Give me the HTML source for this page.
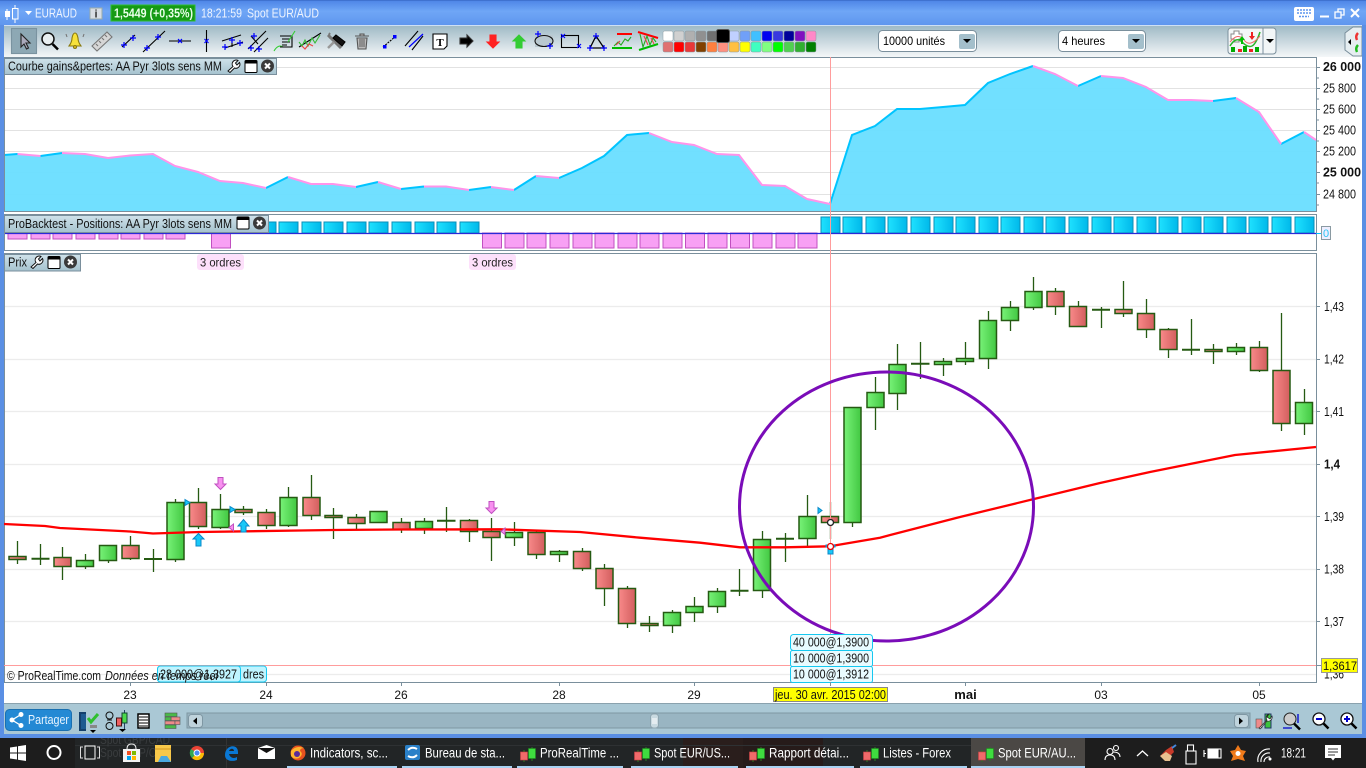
<!DOCTYPE html>
<html><head><meta charset="utf-8"><title>ProRealTime</title>
<style>html,body{margin:0;padding:0;background:#1c1c1c;width:1366px;height:768px;overflow:hidden}svg{display:block}text{font-family:"Liberation Sans",sans-serif}</style></head>
<body>
<svg width="1366" height="768" viewBox="0 0 1366 768" xmlns="http://www.w3.org/2000/svg">
<defs>
<linearGradient id="g"><stop offset="0" stop-color="#78f278"/><stop offset="1" stop-color="#42c842"/></linearGradient>
<linearGradient id="r"><stop offset="0" stop-color="#f98a8a"/><stop offset="1" stop-color="#d25e5e"/></linearGradient>
<linearGradient id="c"><stop offset="0" stop-color="#1fe2ff"/><stop offset="1" stop-color="#00b8ea"/></linearGradient>
<linearGradient id="tb" x2="0" y2="1"><stop offset="0" stop-color="#4c84e6"/><stop offset=".45" stop-color="#6fa6f6"/><stop offset="1" stop-color="#5f96ee"/></linearGradient>
<linearGradient id="tool" x2="0" y2="1"><stop offset="0" stop-color="#9db8c4"/><stop offset="1" stop-color="#f4f7f8"/></linearGradient>
<linearGradient id="leg" x2="0" y2="1"><stop offset="0" stop-color="#cfe2ea"/><stop offset="1" stop-color="#a5c2ce"/></linearGradient>
<g id="cd"><path d="M4 3V15M12 0V14" stroke="#2a7a20" stroke-width="1"/><rect x=".5" y="5" width="7" height="8" fill="#f06a6a" stroke="#c44" stroke-width=".6"/><rect x="8.500" y="1.500" width="7" height="10" fill="#3fdc3f" stroke="#1e8c1e" stroke-width=".6"/></g>
<g id="x"><circle cx="7" cy="7" r="6.500" fill="#3a3a3a"/><path d="M4.500 4.500L9.500 9.500M9.500 4.500L4.500 9.500" stroke="#fff" stroke-width="2"/></g>
<g id="w"><rect x=".5" y=".5" width="12" height="12" rx="1" fill="#fff" stroke="#000"/><rect x="1" y="1" width="11" height="2.500" fill="#000"/></g>
<path id="k" d="M1 13L6 8.500A4 4 0 0 1 11 2.500L8.500 5L10 7L12.500 4.500A4 4 0 0 1 7.500 10L3 14.500Z" fill="#fff" stroke="#111" stroke-width="1"/>
</defs>

<!-- background / frame -->
<rect width="1366" height="768" fill="#5a8fe4"/>
<rect width="1366" height="25" fill="url(#tb)"/>
<rect y="0" width="1366" height="1" fill="#3f72d0"/>
<rect x="4" y="25" width="1358" height="32" fill="url(#tool)"/>
<rect x="4" y="57" width="1358" height="647" fill="#fff"/>

<!-- title bar -->
<g>
<path d="M7 9V20M15 5V23" stroke="#fff"/><rect x="5" y="11" width="5" height="6" fill="#fff"/><rect x="12.500" y="8.500" width="5.500" height="10.500" fill="#6fa6f6" stroke="#fff"/>
<path d="M25 11h7l-3.500 4z" fill="#fff"/>
<text x="35" y="17.500" font-size="13" fill="#eef4ff" textLength="42" lengthAdjust="spacingAndGlyphs">EURAUD</text>
<rect x="90" y="8" width="12" height="11" fill="#d8dee4" stroke="#9aa"/><text x="96" y="17.500" font-size="11" font-weight="bold" text-anchor="middle" fill="#333">i</text>
<rect x="111" y="5" width="84" height="16" fill="#159a15" stroke="#2fbf2f"/>
<text x="114" y="17.500" font-size="13" font-weight="bold" fill="#e8ffe8" textLength="79" lengthAdjust="spacingAndGlyphs">1,5449 (+0,35%)</text>
<text x="201" y="17.500" font-size="13" fill="#eef4ff" textLength="41" lengthAdjust="spacingAndGlyphs">18:21:59</text>
<text x="247" y="17.500" font-size="13" fill="#eef4ff" textLength="72" lengthAdjust="spacingAndGlyphs">Spot EUR/AUD</text>
<rect x="1294" y="7" width="20" height="14" rx="2" fill="#fff"/><path d="M1297 10h14M1297 13h14M1299 16.500h10" stroke="#5f96ee" stroke-width="1.500" stroke-dasharray="2 1"/>
<path d="M1320 16.500h9" stroke="#fff" stroke-width="2"/>
<path d="M1335 12h6v6h-6zM1338 12V9h6v6h-3" fill="none" stroke="#fff" stroke-width="1.300"/>
<path d="M1351 9l8 8M1359 9l-8 8" stroke="#fff" stroke-width="2"/>
</g>
<rect x="4" y="25" width="1358" height="1" fill="#cfe0f5"/>

<!-- toolbar icons -->
<g fill="none" stroke="#000" stroke-width="1.100">
<rect x="11.500" y="28.500" width="25" height="25" fill="#8da8b4" stroke="#7a93a0"/>
<path d="M21 34V47L24 44L26.500 49L28.500 48L26 43H30Z" fill="#aab" stroke="#222"/>
<circle cx="48" cy="39" r="6" fill="#e8eef0" stroke="#111" stroke-width="1.500"/><path d="M52.500 44L58 49.500" stroke="#000" stroke-width="2.500"/>
<path d="M69 46Q72 42 72 38Q73 33 75 33Q77 33 78 38Q78 42 81 46Z" fill="#f7e23a" stroke="#8a7a10"/><circle cx="75" cy="47" r="1.500" fill="#e0c020" stroke="#8a7a10"/><path d="M67 37l-1-3M83 37l1-3" stroke="#777"/>
<path d="M92 46L107 32L112 37L97 51Z" fill="#d6d6d6" stroke="#777"/><path d="M96 44l2 2M99 41l2 2M102 38l2 2M105 35l2 2" stroke="#777"/>
<path d="M122 47L135 35"/>
<path d="M143 52L165 31"/>
<path d="M169 41H191M206.500 30V52M222 41L241 35M225 48L243 42M232 41V47"/>
<path d="M248 49L266 31M254 52L268 38M258 44L251 36"/>
<path d="M274 51Q278 44 283 47" stroke="#3c3"/><path d="M280 36H292V47H280M282 39H290M282 42H290M282 45H287"/><path d="M288 42L295 31" stroke="#3c3"/>
<path d="M299 47L321 33"/><path d="M299 42l3 4 3-6 3 6 4-8 3 5 5-8" stroke="#3b3"/><path d="M302 46l3 3 4-5 4 2" stroke="#e44"/>
<path d="M328 35L341 48" stroke="#777" stroke-width="3"/><path d="M330 33a4 4 0 0 0 0 5" stroke="#777" stroke-width="2"/><path d="M336 35L345 42L342 46L333 38Z" fill="#111"/><path d="M328 48l6-6" stroke="#999" stroke-width="2.500"/>
<path d="M355 36H369M360 36V34H364V36M357 38L358 49H366L367 38Z" fill="#bbb" stroke="#555"/><path d="M360 39V47M362 39V47M364 39V47" stroke="#666"/>
<path d="M383 47L396 36" stroke-dasharray="2 1"/>
<path d="M405 46L418 31M412 50L423 36" stroke="#000"/>
<path d="M433 34H447V46L444 49H433Z" fill="#fff" stroke="#000"/>
<path d="M460 38H467V35L473 41L467 47V44H460Z" fill="#000" stroke="#333"/>
<path d="M490 35H496V42H499L493 48L487 42H490Z" fill="#f22" stroke="#f22"/>
<path d="M516 48H522V41H525L519 35L513 41H516Z" fill="#3c3" stroke="#3c3"/>
<rect x="535" y="35" width="18" height="12" fill="#b9c8cf" stroke="none"/><ellipse cx="544" cy="41" rx="9" ry="5.500" stroke="#111"/>
<rect x="561.500" y="35.500" width="17" height="12" stroke="#000"/>
<path d="M596 36L590 48H604Z" stroke="#000" stroke-width="1.300"/>
<path d="M617 34H632" stroke="#f00" stroke-width="2"/><path d="M612 48H632" stroke="#0b0" stroke-width="2"/><path d="M614 46l4-4 3 3 4-6 3 2 3-4" stroke="#2a2"/><path d="M616 45l4-4" stroke="#d44"/>
<path d="M638 32L658 38" stroke="#f00" stroke-width="2"/><path d="M639 50L658 44" stroke="#0b0" stroke-width="2"/><path d="M640 34l3 13 4-11 3 9 3-7 3 4" stroke="#2a2"/><path d="M644 36l4 9M651 38l3 6" stroke="#e44"/>
</g>
<g stroke="#00f" stroke-width="1.200" fill="none">
<path d="M121 45H127M124 42V48M130 38H136M133 35V41M144 48H150M147 45V51M155 37H161M158 34V40"/>
<path d="M178 39L182 43M182 39L178 43M204.500 39L208.500 43M208.500 39L204.500 43M222 47H228M225 44V50M229 40H235M232 37V43M237 43H243M240 40V46"/>
<path d="M251 36h6M254 33v6M248 48h6M251 45v6M256 49h6M259 46v6"/>
<path d="M535 34h6M538 31v6M547 46h6M550 43v6M561 34l4 4M565 34l-4 4M577 44l4 4M581 44l-4 4M587 48h6M590 45v6M601 48h6M604 45v6M593 36h6M596 33v6"/>
<path d="M409 47L423 34"/>
</g>
<rect x="383" y="45" width="3.500" height="3.500" fill="#00f"/><rect x="393" y="35" width="3.500" height="3.500" fill="#00f"/>
<text x="440" y="46" font-size="11" font-weight="bold" text-anchor="middle" style="font-family:'Liberation Serif',serif">T</text>

<!-- swatches -->
<g stroke="#8a9aa2" stroke-width=".5">
<rect x="663" y="31" width="10" height="10" rx="1.500" fill="#fff"/><rect x="674" y="31" width="10" height="10" rx="1.500" fill="#d0d0d0"/><rect x="685" y="31" width="10" height="10" rx="1.500" fill="#b0b0b0"/><rect x="696" y="31" width="10" height="10" rx="1.500" fill="#909090"/><rect x="707" y="31" width="10" height="10" rx="1.500" fill="#707070"/><rect x="729" y="31" width="10" height="10" rx="1.500" fill="#c0d0ff"/><rect x="740" y="31" width="10" height="10" rx="1.500" fill="#70a0f8"/><rect x="751" y="31" width="10" height="10" rx="1.500" fill="#40c0ff"/><rect x="762" y="31" width="10" height="10" rx="1.500" fill="#0000f0"/><rect x="773" y="31" width="10" height="10" rx="1.500" fill="#3838e0"/><rect x="784" y="31" width="10" height="10" rx="1.500" fill="#00009a"/><rect x="795" y="31" width="10" height="10" rx="1.500" fill="#8010c0"/><rect x="806" y="31" width="10" height="10" rx="1.500" fill="#ff88c8"/>
<rect x="663" y="42" width="10" height="10" rx="1.500" fill="#e07070"/><rect x="674" y="42" width="10" height="10" rx="1.500" fill="#ff0000"/><rect x="685" y="42" width="10" height="10" rx="1.500" fill="#e83838"/><rect x="696" y="42" width="10" height="10" rx="1.500" fill="#804000"/><rect x="707" y="42" width="10" height="10" rx="1.500" fill="#ff8040"/><rect x="718" y="42" width="10" height="10" rx="1.500" fill="#ff9080"/><rect x="729" y="42" width="10" height="10" rx="1.500" fill="#ffc040"/><rect x="740" y="42" width="10" height="10" rx="1.500" fill="#ffff00"/><rect x="751" y="42" width="10" height="10" rx="1.500" fill="#40ffc0"/><rect x="762" y="42" width="10" height="10" rx="1.500" fill="#80ff80"/><rect x="773" y="42" width="10" height="10" rx="1.500" fill="#00ff00"/><rect x="784" y="42" width="10" height="10" rx="1.500" fill="#50d050"/><rect x="795" y="42" width="10" height="10" rx="1.500" fill="#30b030"/><rect x="806" y="42" width="10" height="10" rx="1.500" fill="#008000"/>
</g>
<rect x="716.500" y="29.500" width="13" height="13" rx="2" fill="#000" stroke="#555"/>

<!-- selects -->
<rect x="878.500" y="30.500" width="98" height="21" rx="4" fill="#fff" stroke="#7a8f9c"/>
<text x="883" y="45" font-size="12" textLength="62" lengthAdjust="spacingAndGlyphs">10000 unités</text>
<rect x="959" y="34" width="16" height="15" rx="2" fill="#a4bfcb"/><path d="M963 39h8l-4 4z"/>
<rect x="1058.500" y="30.500" width="87" height="21" rx="4" fill="#fff" stroke="#7a8f9c"/>
<text x="1062" y="45" font-size="12" textLength="43" lengthAdjust="spacingAndGlyphs">4 heures</text>
<rect x="1128" y="34" width="16" height="15" rx="2" fill="#a4bfcb"/><path d="M1132 39h8l-4 4z"/>
<rect x="1228" y="28" width="48" height="26" rx="3" fill="#f2f6f7" stroke="#7a8f9c"/><path d="M1263 28V54" stroke="#7a8f9c"/><path d="M1266 39h8l-4 4z"/>
<path d="M1231 34h3v-3h5v3h3v5h-3v3h-5v-3h-3z" fill="#fff" stroke="#888"/>
<path d="M1230 46Q1236 36 1242 42T1252 46T1260 32" fill="none" stroke="#2bb52b" stroke-width="1.500"/><path d="M1230 42Q1238 32 1244 40T1260 36" fill="none" stroke="#e66" stroke-width="1"/>
<path d="M1241 44V40h-2l3-4 3 4h-2v4z" fill="#0b0"/><path d="M1251 32v4h-2l3 4 3-4h-2v-4z" fill="#e22"/>
<path d="M1231 52V47h4v5zM1238 52v-3h4v3zM1243 52v-6h4v6zM1249 52v-3h4v3zM1255 52v-5h4v5z" fill="#0a0"/><path d="M1238 52v-3h4v3zM1249 52v-3h4v3z" fill="#e22"/>
<path d="M1362 27H1353L1345 33V50L1353 56H1362Z" fill="#e6eef1" stroke="#7a8f9c"/><path d="M1351 39v6l-3-3z"/><path d="M1358 33q-3 3-1 7" stroke="#e33" stroke-width="2.500" fill="none"/><path d="M1358 45q-3 3-1 7" stroke="#2b2" stroke-width="2.500" fill="none"/>

<!-- panel 1: equity curve -->
<g stroke="#e2e2e2">
<path d="M4 67.500H1316M4 88.500H1316M4 109.500H1316M4 130.500H1316M4 151.500H1316M4 172.500H1316M4 194.500H1316"/>
</g>
<path d="M4 155L17.500 154L40.500 156L62 153L85 154L108 158L130 155.500L153 154L175 166L198 172L220 181L243 183L266 188L288 177L311 184L333 184L356 187L378 182L401 189L424 186.500L446 186.500L469 190L491 187L514 190L536 176L559 178L582 168L604 156L627 135L649 133L672 142L694 145L717 154L739 155L762 185L785 186L807 199L830 204L852 135L875 126L897 109L920 109L943 107L965 105L988 83L1010 74L1033 66L1055 74L1078 86L1101 76L1123 78L1146 87L1168 100L1191 100L1213 101L1236 98L1259 112L1281 144L1304 132L1316 140V211.500H4Z" fill="#6cdfff" fill-opacity=".97"/>
<path d="M4 155L17.500 154M40.500 156L62 153M266 188L288 177M356 187L378 182M401 189L424 186.500M469 190L491 187M514 190L536 176M559 178L582 168L604 156L627 135L649 133M830 204L852 135L875 126L897 109L920 109L943 107L965 105L988 83L1010 74L1033 66M1078 86L1101 76M1213 101L1236 98M1281 144L1304 132" fill="none" stroke="#00c4ff" stroke-width="2"/>
<path d="M17.500 154L40.500 156M62 153L85 154L108 158L130 155.500L153 154L175 166L198 172L220 181L243 183L266 188M288 177L311 184L333 184L356 187M378 182L401 189M424 186.500L446 186.500L469 190M491 187L514 190M536 176L559 178M649 133L672 142L694 145L717 154L739 155L762 185L785 186L807 199L830 204M1033 66L1055 74L1078 86M1101 76L1123 78L1146 87L1168 100L1191 100L1213 101M1236 98L1259 112L1281 144M1304 132L1316 140" fill="none" stroke="#ff94ea" stroke-width="2"/>
<path d="M4.500 57V211.500H1316.500V57" fill="none" stroke="#7a8f9c"/><path d="M4 57.500H1316" stroke="#7a8f9c"/>
<g stroke="#7a8f9c"><path d="M1316 67.500h4M1316 78h3M1316 88.500h4M1316 99h3M1316 109.500h4M1316 120h3M1316 130.500h4M1316 141h3M1316 151.500h4M1316 162h3M1316 172.500h4M1316 183h3M1316 194.500h4M1316 205h3"/></g>
<g font-size="12.500" fill="#111">
<text x="1323" y="71" font-weight="bold" font-size="13" textLength="38" lengthAdjust="spacingAndGlyphs">26 000</text>
<text x="1323" y="92.500" textLength="33" lengthAdjust="spacingAndGlyphs">25 800</text>
<text x="1323" y="113.500" textLength="33" lengthAdjust="spacingAndGlyphs">25 600</text>
<text x="1323" y="134.500" textLength="33" lengthAdjust="spacingAndGlyphs">25 400</text>
<text x="1323" y="155.500" textLength="33" lengthAdjust="spacingAndGlyphs">25 200</text>
<text x="1323" y="176.500" font-weight="bold" font-size="13" textLength="38" lengthAdjust="spacingAndGlyphs">25 000</text>
<text x="1323" y="198.500" textLength="33" lengthAdjust="spacingAndGlyphs">24 800</text>
</g>
<rect x="4.500" y="58.500" width="272" height="16" fill="url(#leg)" stroke="#7a8f9c"/>
<text x="8" y="70.500" font-size="12.500" fill="#111" textLength="214" lengthAdjust="spacingAndGlyphs">Courbe gains&amp;pertes: AA Pyr 3lots sens MM</text>
<use href="#k" x="227" y="58"/><use href="#w" x="244.500" y="60"/><use href="#x" x="260.500" y="59"/>

<!-- panel 2 positions -->
<rect x="4.500" y="214.500" width="1312" height="36" fill="#fff" stroke="#7a8f9c"/>
<g fill="#f8a0f4" stroke="#c050c0">
<rect x="8" y="233" width="19" height="6"/><rect x="31" y="233" width="19" height="6"/><rect x="53" y="233" width="19" height="6"/><rect x="76" y="233" width="19" height="6"/><rect x="99" y="233" width="19" height="6"/><rect x="121" y="233" width="19" height="6"/><rect x="144" y="233" width="19" height="6"/><rect x="166" y="233" width="19" height="6"/>
<rect x="211.500" y="233" width="19" height="15"/>
<rect x="482.500" y="233" width="19" height="15"/><rect x="505" y="233" width="19" height="15"/><rect x="527" y="233" width="19" height="15"/><rect x="550" y="233" width="19" height="15"/><rect x="573" y="233" width="19" height="15"/><rect x="595" y="233" width="19" height="15"/><rect x="618" y="233" width="19" height="15"/><rect x="640" y="233" width="19" height="15"/><rect x="663" y="233" width="19" height="15"/><rect x="685.500" y="233" width="19" height="15"/><rect x="708" y="233" width="19" height="15"/><rect x="730.500" y="233" width="19" height="15"/><rect x="753" y="233" width="19" height="15"/><rect x="776" y="233" width="19" height="15"/><rect x="798" y="233" width="19" height="15"/>
</g>
<g fill="url(#c)" stroke="#0a8fb8">
<rect x="189" y="222" width="19" height="11"/><rect x="234" y="222" width="19" height="11"/><rect x="257" y="222" width="19" height="11"/><rect x="279" y="222" width="19" height="11"/><rect x="302" y="222" width="19" height="11"/><rect x="324" y="222" width="19" height="11"/><rect x="347" y="222" width="19" height="11"/><rect x="369" y="222" width="19" height="11"/><rect x="392" y="222" width="19" height="11"/><rect x="415" y="222" width="19" height="11"/><rect x="437" y="222" width="19" height="11"/><rect x="460" y="222" width="19" height="11"/>
<rect x="821" y="217" width="19" height="16"/><rect x="843" y="217" width="19" height="16"/><rect x="866" y="217" width="19" height="16"/><rect x="888" y="217" width="19" height="16"/><rect x="911" y="217" width="19" height="16"/><rect x="934" y="217" width="19" height="16"/><rect x="956" y="217" width="19" height="16"/><rect x="979" y="217" width="19" height="16"/><rect x="1001" y="217" width="19" height="16"/><rect x="1024" y="217" width="19" height="16"/><rect x="1046" y="217" width="19" height="16"/><rect x="1069" y="217" width="19" height="16"/><rect x="1092" y="217" width="19" height="16"/><rect x="1114" y="217" width="19" height="16"/><rect x="1137" y="217" width="19" height="16"/><rect x="1159" y="217" width="19" height="16"/><rect x="1182" y="217" width="19" height="16"/><rect x="1204" y="217" width="19" height="16"/><rect x="1227" y="217" width="19" height="16"/><rect x="1249" y="217" width="19" height="16"/><rect x="1272" y="217" width="19" height="16"/><rect x="1295" y="217" width="19" height="16"/>
</g>
<path d="M5 233.500H1316" stroke="#2a2ad8" stroke-width="1.200"/>
<path d="M1316 233.500h5" stroke="#00c4ff"/><rect x="1321.500" y="226.500" width="9" height="13" fill="#eef" stroke="#8a9aa2"/><text x="1326" y="237" font-size="11" text-anchor="middle" fill="#2cc4f4">0</text>
<rect x="4.500" y="215.500" width="264" height="17" fill="url(#leg)" stroke="#7a8f9c"/>
<text x="8" y="228" font-size="12.500" fill="#111" textLength="224" lengthAdjust="spacingAndGlyphs">ProBacktest - Positions: AA Pyr 3lots sens MM</text>
<use href="#w" x="236.500" y="216.500"/><use href="#x" x="252.500" y="216"/>

<!-- panel 3 price -->
<g stroke="#ececec" stroke-width="1.200"><path d="M4 306.500H1316M4 359.500H1316M4 411.500H1316M4 464.500H1316M4 516.500H1316M4 569.500H1316M4 621.500H1316M4 674.500H1316"/></g>
<path d="M4.500 253.500H1316.500V682.500H4.500Z" fill="none" stroke="#7a8f9c"/>
<rect x="4.500" y="254.500" width="76" height="16.500" fill="url(#leg)" stroke="#7a8f9c"/>
<text x="8" y="266.500" font-size="12.500" fill="#111" textLength="19" lengthAdjust="spacingAndGlyphs">Prix</text>
<use href="#k" x="30" y="254"/><use href="#w" x="47.500" y="256"/><use href="#x" x="63.500" y="255"/>
<rect x="197" y="254" width="47" height="16" rx="3" fill="#fde0fb"/><text x="200" y="266.500" font-size="12" fill="#222" textLength="41" lengthAdjust="spacingAndGlyphs">3 ordres</text>
<rect x="469" y="254" width="47" height="16" rx="3" fill="#fde0fb"/><text x="472" y="266.500" font-size="12" fill="#222" textLength="41" lengthAdjust="spacingAndGlyphs">3 ordres</text>

<!-- wicks -->
<path d="M17.500 541V564M40.500 544V565M62.500 547V580M85.500 554V569M108.500 558V563M130.500 536V560M153.500 549V572M175.500 499V562M198.500 488V529M220.500 494V529M243.500 506V515M266.500 509V529M288.500 487V527M311.500 475V520M333.500 508V539M356.500 514V530M378.500 511V523M401.500 518V533M424.500 518V534M446.500 507V532M469.500 519V542M491.500 518V561M514.500 522V546M536.500 530V559M559.500 550V562M582.500 548V571M604.500 564V606M627.500 586V628M649.500 616V632M672.500 610V633M694.500 597V622M717.500 588V613M739.500 569V596M762.500 531V598M785.500 533V562M807.500 495V546M830.500 502V539M852.500 515V527M875.500 377V430M897.500 344V410M920.500 342V379M943.500 358V376M965.500 342V365M988.500 311V369M1010.500 301V331M1033.500 277V310M1055.500 288V315M1078.500 301V327M1101.500 307V328M1123.500 281V317M1146.500 299V338M1168.500 328V358M1191.500 319V355M1213.500 344V364M1236.500 343V355M1259.500 341V372M1281.500 313V431M1304.500 389V435" stroke="#255a12" stroke-width="1.300" fill="none"/>
<!-- dojis -->
<path d="M31.500 558.700H49.500M144 559H162M437 520.700H455.500M730.500 590.700H748.500M776 538.700H794M911 363.700H929.500M1092 309.700H1110M1182 349.700H1200" stroke="#255a12" stroke-width="2"/>
<!-- bodies -->
<g stroke="#255a12" stroke-width="1.500" fill="url(#g)">
<rect x="76.500" y="560.500" width="17" height="6"/><rect x="99.500" y="545.500" width="17" height="15"/><rect x="167" y="502.500" width="17" height="57"/><rect x="212" y="509.500" width="17" height="18"/><rect x="280" y="497.500" width="17" height="28"/><rect x="370" y="511.500" width="17" height="11"/><rect x="415.500" y="521.500" width="17" height="7"/><rect x="505.500" y="532.500" width="17" height="5"/><rect x="550.500" y="551.500" width="17" height="3"/><rect x="663.500" y="612.500" width="17" height="13"/><rect x="686" y="606.500" width="17" height="6"/><rect x="708.500" y="591.500" width="17" height="15"/><rect x="753.500" y="539.500" width="17" height="51"/><rect x="799" y="516.500" width="17" height="22"/><rect x="844" y="407.500" width="17" height="115"/><rect x="867" y="392.500" width="17" height="15"/><rect x="889" y="364.500" width="17" height="29"/><rect x="934.500" y="361.500" width="17" height="3"/><rect x="956.500" y="358.500" width="17" height="3"/><rect x="979.500" y="320.500" width="17" height="38"/><rect x="1001.500" y="307.500" width="17" height="13"/><rect x="1025" y="291.500" width="17" height="16"/><rect x="1227.500" y="347.500" width="17" height="4"/><rect x="1295.500" y="402.500" width="17" height="21"/>
</g>
<g stroke="#255a12" stroke-width="1.500" fill="url(#r)">
<rect x="9" y="556.500" width="17" height="3"/><rect x="54" y="557.500" width="17" height="9"/><rect x="122" y="545.500" width="17" height="13"/><rect x="189.500" y="502.500" width="17" height="24"/><rect x="235" y="509.500" width="17" height="3"/><rect x="258" y="512.500" width="17" height="13"/><rect x="303" y="497.500" width="17" height="18"/><rect x="325" y="515.500" width="17" height="2"/><rect x="348" y="517.500" width="17" height="6"/><rect x="393" y="522.500" width="17" height="7"/><rect x="460.500" y="520.500" width="17" height="11"/><rect x="483" y="531.500" width="17" height="6"/><rect x="528" y="532.500" width="17" height="22"/><rect x="573.500" y="551.500" width="17" height="17"/><rect x="596" y="568.500" width="17" height="20"/><rect x="618.500" y="588.500" width="17" height="35"/><rect x="641" y="623.500" width="17" height="2"/><rect x="821.500" y="516.500" width="17" height="6"/><rect x="1047" y="291.500" width="17" height="15"/><rect x="1069.500" y="306.500" width="17" height="20"/><rect x="1115" y="309.500" width="17" height="4"/><rect x="1137.500" y="313.500" width="17" height="16"/><rect x="1160" y="329.500" width="17" height="20"/><rect x="1205" y="349.500" width="17" height="2"/><rect x="1250.500" y="347.500" width="17" height="23"/><rect x="1273" y="370.500" width="17" height="53"/>
</g>

<!-- MA -->
<path d="M4 524L45 526L60 528L130 531.500L153 533.500L200 532L300 530.500L333 530L400 529.500L500 529.300L540 530.700L580 532L640 537.700L700 542.700L740 547.300L785 547.300L830 546.300L880 537.700L960 517L1034 499L1100 483L1150 472L1235 455L1316 447" fill="none" stroke="#ff0000" stroke-width="2.300" stroke-linejoin="round"/>

<!-- cursor lines -->
<path d="M830.500 57V634" stroke="#ff9c9c" stroke-width="1"/>
<path d="M4 665.500H1316" stroke="#ff9c9c"/>

<!-- arrows -->
<g fill="#18c8f8" stroke="#0a88c8">
<path d="M196 546V539H193L198.500 533.500L204 539H201V546Z"/><path d="M241 532V526H238L243.500 519.500L249 526H246V532Z"/>
<path d="M185 499.500L190 502.500L185 505.500Z"/><path d="M230 506.500L235 509.500L230 512.500Z"/><path d="M818 507.500L822 510.500L818 513.500Z"/>
<path d="M828 554V547H826V545H835V547H833V554Z"/>
</g>
<g fill="#f890f0" stroke="#c050c0">
<path d="M218 477.500H223V484H226L220.500 489.500L215 484H218Z"/><path d="M489 501.500H494V508H497L491.500 513.500L486 508H489Z"/>
<path d="M233.500 524V531L229 527.500Z"/><path d="M505 528V534.500L501 531.500Z"/>
</g>
<circle cx="830.500" cy="522.500" r="3" fill="#fff" stroke="#222" stroke-width="1.300"/>
<circle cx="830.500" cy="546.500" r="3" fill="#fff" stroke="#e00" stroke-width="1.300"/>

<!-- circle -->
<ellipse cx="886.500" cy="506.500" rx="147" ry="134.500" fill="none" stroke="#7a0cb8" stroke-width="3"/>

<!-- axis right -->
<g stroke="#7a8f9c"><path d="M1316 306.500h4M1316 359.500h4M1316 411.500h4M1316 464.500h4M1316 516.500h4M1316 569.500h4M1316 621.500h4M1316 665.500h6"/></g>
<g font-size="12.500" fill="#111">
<text x="1324" y="311" textLength="20" lengthAdjust="spacingAndGlyphs">1,43</text>
<text x="1324" y="363.500" textLength="20" lengthAdjust="spacingAndGlyphs">1,42</text>
<text x="1324" y="416" textLength="20" lengthAdjust="spacingAndGlyphs">1,41</text>
<text x="1324" y="468.500" font-weight="bold" textLength="16" lengthAdjust="spacingAndGlyphs">1,4</text>
<text x="1324" y="521" textLength="20" lengthAdjust="spacingAndGlyphs">1,39</text>
<text x="1324" y="573.500" textLength="20" lengthAdjust="spacingAndGlyphs">1,38</text>
<text x="1324" y="626" textLength="20" lengthAdjust="spacingAndGlyphs">1,37</text>
<text x="1324" y="678.500" textLength="20" lengthAdjust="spacingAndGlyphs">1,36</text>
</g>
<rect x="1321.500" y="658.500" width="36" height="14" fill="#ffff00" stroke="#999"/>
<text x="1323" y="670" font-size="12" fill="#111" textLength="34" lengthAdjust="spacingAndGlyphs">1,3617</text>

<!-- order labels -->
<g fill="#e8fbff" stroke="#16c8f0">
<rect x="790.500" y="634.500" width="82" height="16" rx="3"/><rect x="790.500" y="650.500" width="82" height="16" rx="2"/><rect x="790.500" y="666.500" width="82" height="16" rx="2"/>
</g>
<g fill="#bff4ff" stroke="#16c8f0"><rect x="157.500" y="666" width="109" height="16" rx="3"/><rect x="157.500" y="666" width="83" height="16" rx="3"/></g>
<g font-size="12.500" fill="#111">
<text x="793" y="646.500" textLength="76" lengthAdjust="spacingAndGlyphs">40 000@1,3900</text>
<text x="793" y="662.500" textLength="76" lengthAdjust="spacingAndGlyphs">10 000@1,3900</text>
<text x="793" y="678.500" textLength="76" lengthAdjust="spacingAndGlyphs">10 000@1,3912</text>
<text x="160" y="678.500" textLength="77" lengthAdjust="spacingAndGlyphs">28 000@1,3927</text>
<text x="243" y="678.500" textLength="21" lengthAdjust="spacingAndGlyphs">dres</text>
<text x="7" y="680" textLength="94" lengthAdjust="spacingAndGlyphs">© ProRealTime.com</text>
<text x="105" y="680" font-style="italic" textLength="113" lengthAdjust="spacingAndGlyphs">Données en temps réel</text>
</g>

<!-- x axis -->
<g stroke="#7a8f9c"><path d="M130.500 682v4M266.500 682v4M401.500 682v4M559.500 682v4M694.500 682v4M830.500 682v4M965.500 682v4M1101.500 682v4M1259.500 682v4"/></g>
<g font-size="12" fill="#111" text-anchor="middle">
<text x="130" y="699">23</text><text x="266" y="699">24</text><text x="401" y="699">26</text><text x="559" y="699">28</text><text x="694" y="699">29</text><text x="965.500" y="699" font-weight="bold" font-size="13">mai</text><text x="1101" y="699">03</text><text x="1259" y="699">05</text>
</g>
<rect x="773.500" y="687.500" width="114" height="14" fill="#ffff00" stroke="#888"/>
<text x="775" y="699" font-size="12.500" fill="#111" textLength="111" lengthAdjust="spacingAndGlyphs">jeu. 30 avr. 2015 02:00</text>

<!-- bottom bar -->
<rect x="4" y="703" width="1358" height="31" fill="#aac8d5"/><rect x="4" y="703" width="1358" height="1" fill="#8aa2ae"/>
<rect x="187" y="713" width="1063" height="15" fill="#99b5c2" stroke="#7f97a3"/>
<rect x="5.500" y="709.500" width="66" height="21" rx="4" fill="#2489d4" stroke="#1a70b0"/>
<g fill="#fff"><circle cx="21" cy="714.500" r="2.500"/><circle cx="12" cy="720" r="2.500"/><circle cx="21" cy="725.500" r="2.500"/></g><path d="M21 714.500L12 720L21 725.500" stroke="#fff" stroke-width="1.300" fill="none"/>
<text x="28" y="724" font-size="12.500" fill="#e8f4ff" textLength="41" lengthAdjust="spacingAndGlyphs">Partager</text>
<!-- bottom left icons -->
<path d="M86 713H80V730H86" fill="#1e5a90" stroke="#14406c" stroke-width="2"/>
<path d="M88 718l3 4 7-8" fill="none" stroke="#2fc02f" stroke-width="3"/><path d="M90 725h7v3h-7z" fill="#888"/><path d="M90 730h6l-3 3z"/>
<circle cx="109.500" cy="715.500" r="3.500" fill="none" stroke="#111"/><circle cx="109.500" cy="726" r="3.500" fill="none" stroke="#111"/><path d="M107 720h5" stroke="#111"/>
<path d="M124.500 710V730" stroke="#246"/><rect x="122" y="713" width="5" height="10" fill="#4cd84c" stroke="#143"/><rect x="116.500" y="718" width="5" height="8" fill="#ee6060" stroke="#411"/>
<path d="M119 729h7l-3.500 3z"/>
<rect x="138" y="714" width="11" height="14" fill="#fff" stroke="#000" stroke-width="1.500"/><path d="M139 717h9M139 720h9M139 723h9M139 726h9" stroke="#000"/>
<g stroke="#555" stroke-width=".6"><rect x="165" y="713" width="12" height="3.500" fill="#4aba4a"/><rect x="171" y="717" width="9" height="3.500" fill="#ee8a8a"/><rect x="165" y="717" width="6" height="3.500" fill="#4aba4a"/><rect x="165" y="721" width="10" height="3.500" fill="#ee8a8a"/><rect x="175" y="721" width="5" height="3.500" fill="#ee8a8a"/><rect x="165" y="725" width="11" height="3.500" fill="#4aba4a"/></g>
<rect x="188.500" y="714.500" width="14" height="13" rx="3" fill="#bfd3dc" stroke="#7f97a3"/><path d="M197 717.500v7l-4-3.500z"/>
<rect x="1234.500" y="714.500" width="14" height="13" rx="3" fill="#bfd3dc" stroke="#7f97a3"/><path d="M1239 717.500v7l4-3.500z"/>
<rect x="650.500" y="714" width="8" height="14" rx="3" fill="#c9dae1" stroke="#8ea5b0"/><path d="M652 719h5M652 721h5M652 723h5" stroke="#fff"/>
<!-- bottom right icons -->
<rect x="1256" y="719" width="6" height="9" fill="#ee8a8a" stroke="#555" stroke-width=".6"/><rect x="1265" y="714" width="6" height="14" fill="#3cc43c" stroke="#236"/><path d="M1259 728l8-8a4 4 0 0 1 2-6l-2 3 3 2 2-3a4 4 0 0 1-5 5l-7 8z" fill="#fff" stroke="#222" stroke-width=".7"/>
<circle cx="1290" cy="719" r="6" fill="#ccc" stroke="#222"/><path d="M1294 723.500l6 6" stroke="#000" stroke-width="2.500"/><path d="M1298 714v9M1283 728h9" stroke="#00c" stroke-width="1.300"/>
<circle cx="1319" cy="719" r="6" fill="#fff" stroke="#111" stroke-width="1.300"/><path d="M1316 719h6" stroke="#00c" stroke-width="2"/><path d="M1323.500 723.500l5 5" stroke="#000" stroke-width="2.500"/>
<circle cx="1347" cy="719" r="6" fill="#fff" stroke="#111" stroke-width="1.300"/><path d="M1344 719h6M1347 716v6" stroke="#00c" stroke-width="2"/><path d="M1351.500 723.500l5 5" stroke="#000" stroke-width="2.500"/>

<!-- frame edges -->
<rect x="0" y="25" width="4" height="713" fill="#5a8fe4"/><rect x="1362" y="25" width="4" height="713" fill="#5a8fe4"/>
<rect x="4" y="734" width="1358" height="4" fill="#5a8fe4"/>

<!-- taskbar -->
<rect y="738" width="1366" height="30" fill="#1d1d1d"/>
<rect x="75" y="738" width="910" height="30" fill="#222526"/>
<rect x="683" y="738" width="60" height="30" fill="#2a1e1c"/><rect x="743" y="738" width="80" height="30" fill="#261b1a"/>
<rect x="226" y="738" width="1" height="30" fill="#333"/>
<path d="M75 745.500H985" stroke="#2e3133"/>
<svg x="0" y="738" width="1366" height="30" viewBox="0 0 1366 30">
<text x="100" y="6" font-size="13" fill="#3a3d3f" textLength="70" lengthAdjust="spacingAndGlyphs">Spot GBP/CAD</text>
<text x="100" y="19" font-size="13" fill="#3a3d3f" textLength="70" lengthAdjust="spacingAndGlyphs">Spot GBP/CHF</text>
</svg>
<rect x="971" y="738" width="114" height="30" fill="#4b4845"/>
<g fill="#a8d2f2"><rect x="287" y="766" width="110" height="2"/><rect x="402" y="766" width="110" height="2"/><rect x="517" y="766" width="106" height="2"/><rect x="631" y="766" width="107" height="2"/><rect x="746" y="766" width="108" height="2"/><rect x="860" y="766" width="107" height="2"/><rect x="971" y="766" width="114" height="2"/></g>
<path d="M10 747.500L17 746.500V752.500H10ZM18 746.300L26 745V752.500H18ZM10 753.500H17V759.500L10 758.500ZM18 753.500H26V761L18 759.700Z" fill="#fff"/>
<circle cx="54" cy="752.500" r="6.500" fill="none" stroke="#fff" stroke-width="2"/>
<rect x="85" y="746" width="10" height="13" fill="none" stroke="#fff"/><path d="M83 747h-2.500v11H83M97 747h2.500v11H97" fill="none" stroke="#ddd"/>
<path d="M123 749H140V762H123Z" fill="#f3f3f3"/><path d="M127 749Q127 744 131.500 744T136 749" fill="none" stroke="#eee"/><rect x="127" y="751" width="4" height="4" fill="#f25022"/><rect x="132" y="751" width="4" height="4" fill="#7fba00"/><rect x="127" y="756" width="4" height="4" fill="#00a4ef"/><rect x="132" y="756" width="4" height="4" fill="#ffb900"/>
<path d="M155 745H171V762H155Z" fill="#f8c84a"/><path d="M155 749H171" stroke="#e0a830" stroke-width="1.500"/><path d="M158 762L161 756H167L171 762Z" fill="#4aa8e0"/>
<circle cx="197" cy="753" r="7" fill="#ea4335"/><path d="M197 753L204 753A7 7 0 0 1 192 758Z" fill="#fbbc05"/><path d="M197 753L192 758A7 7 0 0 1 191 749Z" fill="#34a853"/><circle cx="197" cy="753" r="3" fill="#4a8af4" stroke="#fff"/>
<path d="M225 755C225 745 238 743 238 752V754H229C230 758 234 759 237 757V760C232 762 225 761 225 755ZM229 751H234C234 748 230 748 229 751Z" fill="#0a78d4"/>
<path d="M258 748L266.500 745L275 748V759H258Z" fill="#fff"/><path d="M258 748L266.500 753L275 748Z" fill="#111"/>
<circle cx="298" cy="753" r="7.500" fill="#e8521f"/><path d="M291 751Q296 745 304 748Q300 748 300 751Q304 754 299 758Q294 760 291 756Z" fill="#ffb52e"/><circle cx="297" cy="754" r="3" fill="#5a2b9a"/>
<rect x="405" y="745" width="15" height="15" rx="2" fill="#2a80c8"/><path d="M408 750Q412 746 417 749M417 755Q413 759 408 756" stroke="#fff" stroke-width="2" fill="none"/>
<use href="#cd" x="520" y="747"/><use href="#cd" x="634" y="747"/><use href="#cd" x="749" y="747"/><use href="#cd" x="863" y="747"/><use href="#cd" x="978" y="747"/>
<g fill="#fff" font-size="13.500">
<text x="310" y="757.500" textLength="78" lengthAdjust="spacingAndGlyphs">Indicators, sc...</text>
<text x="425" y="757.500" textLength="80" lengthAdjust="spacingAndGlyphs">Bureau de sta...</text>
<text x="540" y="757.500" textLength="79" lengthAdjust="spacingAndGlyphs">ProRealTime ...</text>
<text x="654" y="757.500" textLength="76" lengthAdjust="spacingAndGlyphs">Spot EUR/US...</text>
<text x="769" y="757.500" textLength="80" lengthAdjust="spacingAndGlyphs">Rapport détai...</text>
<text x="883" y="757.500" textLength="68" lengthAdjust="spacingAndGlyphs">Listes - Forex</text>
<text x="998" y="757.500" textLength="78" lengthAdjust="spacingAndGlyphs">Spot EUR/AU...</text>
<text x="1281" y="757.500" textLength="25" lengthAdjust="spacingAndGlyphs">18:21</text>
</g>
<!-- tray -->
<g fill="none" stroke="#fff" stroke-width="1.100">
<circle cx="1110" cy="751.500" r="3"/><circle cx="1116" cy="748" r="2.500"/><path d="M1105 760Q1105 755 1110 755Q1115 755 1115 760M1113 752Q1120 752 1120 757"/>
<path d="M1137 756L1142.500 751L1148 756" stroke-width="1.300"/>
<path d="M1186 751H1196V764H1186Z"/><rect x="1187.500" y="745" width="6" height="6"/>
<rect x="1208" y="749" width="13" height="9"/><rect x="1209" y="750" width="9" height="7" fill="#fff"/><path d="M1206 753.500h-2M1204 750v7"/>
<path d="M1258 762A11 11 0 0 1 1270 749M1261 762A8 8 0 0 1 1270 753M1264 762A5 5 0 0 1 1270 757"/>
</g>
<path d="M1160 756L1166 750L1172 746L1174 752L1168 758Z" fill="#c83a2a"/><path d="M1160 756L1165 761H1170L1172 756L1166 752Z" fill="#e8c090"/><path d="M1172 748L1176 745" stroke="#4488dd" stroke-width="2"/>
<path d="M1238 745L1241 750L1246 751L1243 756L1245 761L1238 759L1231 761L1233 756L1230 751L1235 750Z" fill="#f07a1a"/><circle cx="1238" cy="753.500" r="2.500" fill="#fff"/>
<circle cx="1270" cy="759" r="1.500" fill="#fff"/>
<path d="M1325 745H1341V758H1335L1333 760.500L1331 758H1325Z" fill="#fff"/><path d="M1328 749H1338M1328 752H1338M1328 755H1335" stroke="#333"/>
</svg>
</body></html>
